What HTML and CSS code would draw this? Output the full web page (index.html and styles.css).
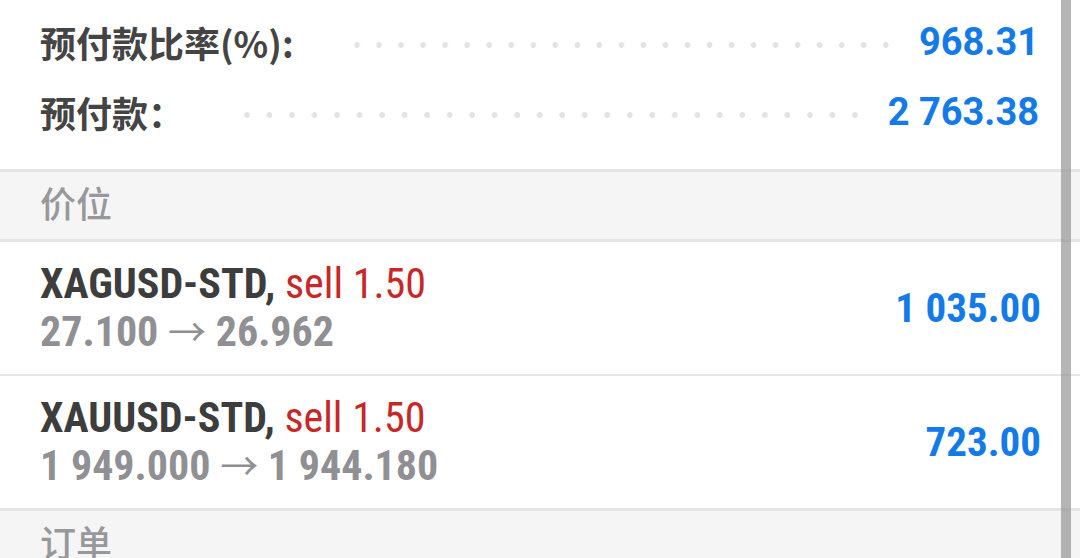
FILE: index.html
```html
<!DOCTYPE html>
<html lang="zh-CN">
<head>
    <meta charset="UTF-8">
    <meta name="viewport" content="width=device-width, initial-scale=1.0">
    <title>交易</title>
    <link rel="stylesheet" href="styles.css">
</head>
<body>
    <div class="screen">
        <div class="summary">
            <div class="summary-row">
                <span class="label">预付款比率(%):</span>
                <span class="leader"></span>
                <span class="amount">968.31</span>
            </div>
            <div class="summary-row">
                <span class="label">预付款：</span>
                <span class="leader"></span>
                <span class="amount">2 763.38</span>
            </div>
        </div>

        <div class="section-head">价位</div>

        <div class="position">
            <div class="position-info">
                <div class="symbol">XAGUSD-STD, <span class="side">sell 1.50</span></div>
                <div class="prices">27.100 <span class="arrow">&rarr;</span> 26.962</div>
            </div>
            <div class="profit">1 035.00</div>
        </div>

        <div class="position">
            <div class="position-info">
                <div class="symbol">XAUUSD-STD, <span class="side">sell 1.50</span></div>
                <div class="prices">1 949.000 <span class="arrow">&rarr;</span> 1 944.180</div>
            </div>
            <div class="profit">723.00</div>
        </div>

        <div class="section-head">订单</div>

        <div class="scrollbar"></div>
    </div>
</body>
</html>
```

FILE: styles.css
```css
body {
    margin: 0;
    padding: 0;
    background: #ffffff;
    font-family: Roboto, "Noto Sans CJK SC", sans-serif;
    overflow: hidden;
}
.screen {
    position: relative;
    width: 1080px;
    height: 558px;
    overflow: hidden;
}
.summary {
    height: 169px;
    box-sizing: border-box;
    padding: 7px 41px 0 40px;
}
.summary-row {
    display: flex;
    align-items: center;
    height: 70px;
}
.label {
    font-family: "Noto Sans CJK SC", sans-serif;
    font-size: 36px;
    font-weight: 700;
    color: #444444;
}
.leader {
    flex: 1;
    height: 6px;
    margin: 6px 22px 0 52px;
    background-image: radial-gradient(circle, #e3e3e3 2.6px, transparent 3.2px);
    background-size: 22px 6px;
    background-repeat: space no-repeat;
}
.amount {
    font-size: 38px;
    font-weight: 700;
    color: #137ae8;
}
.section-head {
    height: 67px;
    line-height: 61px;
    padding-left: 40px;
    background: #f5f5f5;
    border-top: 3px solid #e4e4e4;
    border-bottom: 3px solid #e4e4e4;
    font-family: "Noto Sans CJK SC", sans-serif;
    font-size: 36px;
    font-weight: 500;
    color: #98989c;
}
.position {
    display: flex;
    align-items: center;
    justify-content: space-between;
    height: 132px;
    padding: 0 39px 0 40px;
    border-bottom: 2px solid #e6e6e6;
}
.position + .section-head {
    margin-top: -2px;
}
.position-info {
    font-family: "Roboto Condensed", "Liberation Sans Narrow", "DejaVu Sans Condensed", Roboto, sans-serif;
    font-stretch: condensed;
    font-size: 42px;
    line-height: 46px;
}
.symbol {
    font-weight: 700;
    color: #3d3d3d;
}
.side {
    font-weight: 400;
    color: #c62828;
}
.prices {
    font-weight: 700;
    color: #909094;
}
.arrow {
    font-family: "Noto Sans CJK SC", sans-serif;
    font-size: 38px;
    font-weight: 400;
}
.profit {
    font-family: "Roboto Condensed", "Liberation Sans Narrow", "DejaVu Sans Condensed", Roboto, sans-serif;
    font-stretch: condensed;
    font-size: 41px;
    font-weight: 700;
    color: #137ae8;
}
.scrollbar {
    position: absolute;
    top: 0;
    left: 1061px;
    width: 10px;
    height: 100%;
    background: rgba(150, 150, 150, 0.7);
}
```
